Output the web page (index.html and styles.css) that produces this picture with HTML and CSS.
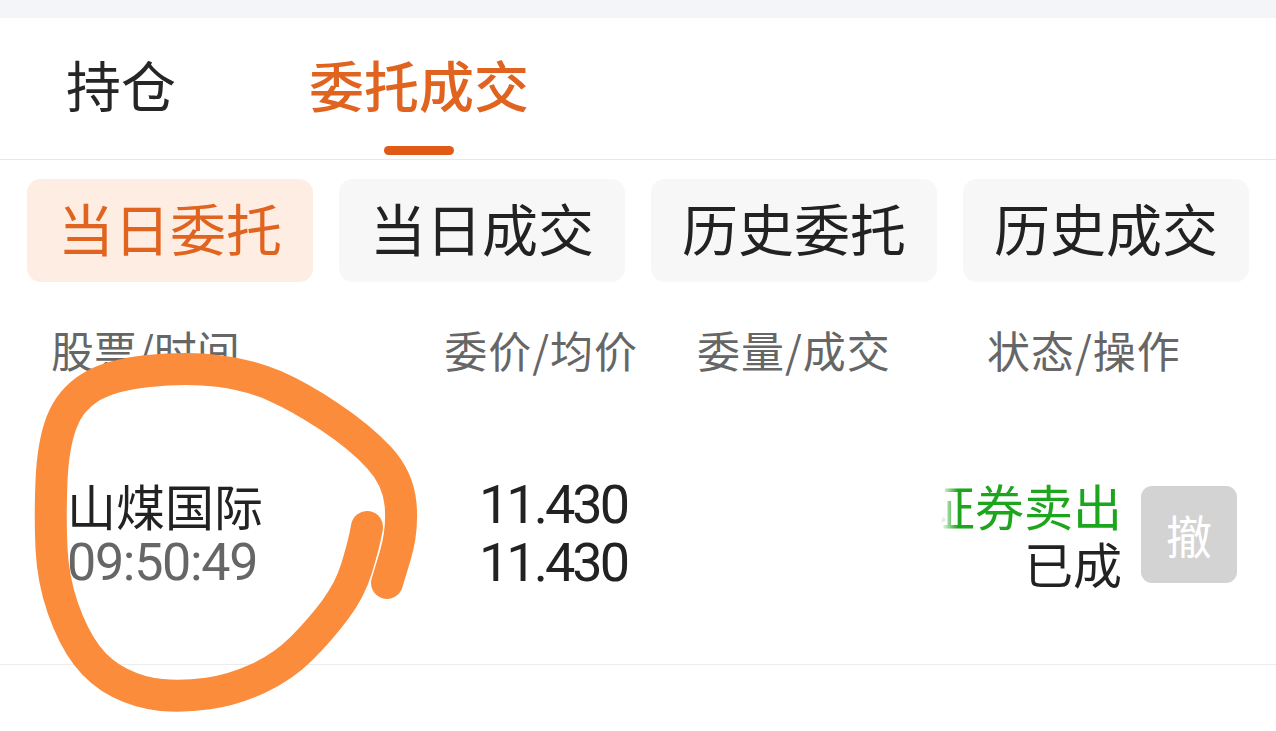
FILE: index.html
```html
<!DOCTYPE html>
<html lang="zh-CN">
<head>
<meta charset="utf-8">
<title>委托成交</title>
<link rel="stylesheet" href="styles.css">
</head>
<body>
<div class="page">
  <div class="topstrip"></div>
  <div class="tabbar">
    <div class="tab"><span class="tab-text">持仓</span><span class="tab-ind"></span></div>
    <div class="tab tab-active"><span class="tab-text">委托成交</span><span class="tab-ind"></span></div>
  </div>
  <div class="subtabs">
    <div class="subtab subtab-active">当日委托</div>
    <div class="subtab">当日成交</div>
    <div class="subtab">历史委托</div>
    <div class="subtab">历史成交</div>
  </div>
  <div class="cols head">
    <div class="h1">股票/时间</div>
    <div class="h2">委价/均价</div>
    <div class="h3">委量/成交</div>
    <div class="h4">状态/操作</div>
  </div>
  <div class="cols row">
    <div class="d1">
      <div class="name">山煤国际</div>
      <div class="time">09:50:49</div>
    </div>
    <div class="d2">
      <div class="num">11.430</div>
      <div class="num">11.430</div>
    </div>
    <div class="d3"></div>
    <div class="d4">
      <div class="status">
        <div class="sell"><span class="faded">证</span>券卖出</div>
        <div class="done">已成</div>
      </div>
      <div class="cancel">撤</div>
    </div>
  </div>
  <svg class="scribble" width="1276" height="731" viewBox="0 0 1276 731">
    <path d="M387,583 L395,556.5 Q403,530 400.5,504 Q398,478 379,457.5 Q360,437 330,417 Q300,397 275,386 Q250,375 218.5,371 Q187,367 148.5,371 Q110,375 90,387.5 Q70,400 61.5,422.5 Q53,445 51.5,481 Q50,517 51.5,548.5 Q53,580 63,608.5 Q73,637 86.5,655 Q100,673 120,683 Q140,693 161.5,695 Q183,697 208,693.5 Q233,690 258,678.5 Q283,667 301.5,648.5 Q320,630 335,610 Q350,590 356.5,568.5 Q363,547 365,537 L367,527" fill="none" stroke="#fb8c3b" stroke-width="32" stroke-linecap="round" stroke-linejoin="round"/>
  </svg>
</div>
</body>
</html>
```

FILE: styles.css
```css
* { box-sizing: border-box; }
html, body { margin: 0; padding: 0; background: #ffffff; }
body {
  font-family: "Noto Sans CJK SC", "Noto Sans", sans-serif;
  color: #222222;
  width: 1276px;
  height: 731px;
  overflow: hidden;
}
.page { position: relative; width: 1276px; height: 731px; background: #fff; }

.topstrip { height: 18px; background: #f3f5f8; }

.tabbar {
  height: 142px;
  display: flex;
  gap: 133px;
  padding-left: 66px;
  border-bottom: 1px solid #e8e8e8;
}
.tab {
  display: flex;
  flex-direction: column;
  align-items: center;
  padding-top: 35px;
}
.tab-text {
  font-size: 55px;
  line-height: 60px;
  color: #262626;
  white-space: nowrap;
}
.tab-ind {
  margin-top: 33px;
  width: 70px;
  height: 9px;
  border-radius: 5px;
  background: transparent;
}
.tab-active .tab-text { color: #e0641f; font-weight: 500; }
.tab-active .tab-ind { background: #df5b16; }

.subtabs {
  display: flex;
  gap: 26px;
  padding: 19px 27px 0;
}
.subtab {
  flex: 1;
  height: 103px;
  border-radius: 14px;
  background: #f7f7f7;
  display: flex;
  align-items: center;
  justify-content: center;
  padding-bottom: 8px;
  font-size: 56px;
  line-height: 1;
  color: #222;
  white-space: nowrap;
}
.subtab-active { background: #fdede3; color: #e0641f; }

.cols {
  display: grid;
  grid-template-columns: 400px 240px 260px 376px;
}
.head {
  height: 140px;
  align-items: center;
  padding-bottom: 6px;
  font-size: 43px;
  line-height: 60px;
  color: #666;
  white-space: nowrap;
}
.h1 { padding-left: 51px; }
.h2 { text-align: right; padding-right: 2px; letter-spacing: 1px; }
.h3 { padding-left: 57px; letter-spacing: 1px; }
.h4 { padding-left: 87px; letter-spacing: 1px; }

.row {
  height: 243px;
  padding-top: 54px;
  border-bottom: 1px solid #ececec;
  align-items: start;
}
.d1 { padding-left: 67px; }
.name { font-size: 49px; line-height: 58px; color: #222; white-space: nowrap; }
.time {
  font-family: "Roboto", "Liberation Sans", sans-serif;
  font-size: 52px;
  line-height: 58px;
  letter-spacing: -1.3px;
  color: #666;
}
.d2 { text-align: right; padding-right: 13px; }
.num {
  font-family: "Roboto", "Liberation Sans", sans-serif;
  font-size: 54px;
  line-height: 58px;
  letter-spacing: -3px;
  color: #222;
}
.d4 {
  display: flex;
  justify-content: flex-end;
  align-items: center;
  gap: 19px;
  padding-right: 39px;
  height: 116px;
}
.status { text-align: right; font-size: 49px; line-height: 58px; white-space: nowrap; }
.sell { color: #1ea51e; }
.faded {
  -webkit-mask-image: linear-gradient(90deg, transparent 0%, transparent 30%, #000 65%);
  mask-image: linear-gradient(90deg, transparent 0%, transparent 30%, #000 65%);
}
.done { color: #222; }
.cancel {
  flex: none;
  width: 96px;
  height: 97px;
  border-radius: 11px;
  background: #d3d3d3;
  color: #fff;
  font-size: 46px;
  display: flex;
  align-items: center;
  justify-content: center;
}

.scribble {
  position: absolute;
  left: 0;
  top: 0;
  pointer-events: none;
}
```
